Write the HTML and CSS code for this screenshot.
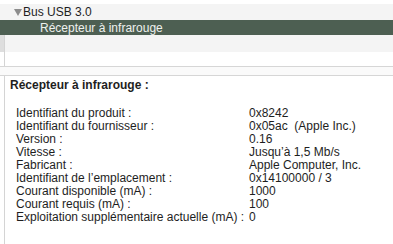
FILE: index.html
```html
<!DOCTYPE html>
<html lang="fr">
<head>
  <meta charset="UTF-8">
  <title>Informations système – USB</title>
  <link rel="stylesheet" href="styles.css">
</head>
<body>
  <div class="tree">
    <div class="row row-cut"></div>
    <div class="row row-alt"><span class="disclosure"></span>Bus USB 3.0</div>
    <div class="row row-selected">Récepteur à infrarouge</div>
    <div class="row row-alt row-edge"></div>
    <div class="row row-plain row-edge"></div>
  </div>

  <div class="splitter"></div>

  <div class="details">
    <h2 class="details-title">Récepteur à infrarouge :</h2>
    <dl class="props">
      <dt>Identifiant du produit :</dt><dd>0x8242</dd>
      <dt>Identifiant du fournisseur :</dt><dd>0x05ac&nbsp; (Apple Inc.)</dd>
      <dt>Version :</dt><dd>0.16</dd>
      <dt>Vitesse :</dt><dd>Jusqu’à 1,5 Mb/s</dd>
      <dt>Fabricant :</dt><dd>Apple Computer, Inc.</dd>
      <dt>Identifiant de l’emplacement :</dt><dd>0x14100000 / 3</dd>
      <dt>Courant disponible (mA) :</dt><dd>1000</dd>
      <dt>Courant requis (mA) :</dt><dd>100</dd>
      <dt>Exploitation supplémentaire actuelle (mA) :</dt><dd>0</dd>
    </dl>
  </div>
</body>
</html>
```

FILE: styles.css
```css
* {
  box-sizing: border-box;
}

html, body {
  height: 100%;
}

body {
  margin: 0;
  overflow: hidden;
  font-family: "Liberation Sans", Arial, sans-serif;
  font-size: 12px;
  color: #1e1e1e;
  background-color: white;
}

.row {
  height: 16px;
  line-height: 17px;
  white-space: nowrap;
}

.row-cut {
  height: 4px;
}

.row-alt {
  background-color: #f4f4f4;
  padding-left: 14px;
}

/* disclosure triangle drawn with borders */
.disclosure {
  display: inline-block;
  width: 0;
  height: 0;
  margin-right: 1px;
  border-left: 4px solid transparent;
  border-right: 4px solid transparent;
  border-top: 7px solid #8c8c8c;
  vertical-align: 0;
}

.row-selected {
  height: 15px;
  line-height: 17px;
  background-color: #4d5f52;
  color: #eef1ee;
  padding-left: 40px;
}

.row-edge {
  height: 17px;
  border-left: 1px solid #d4d4d4;
  margin-left: 4px;
  padding-left: 0;
  position: relative;
}

.row-edge:before {
  content: "";
  position: absolute;
  left: -5px;
  top: 0;
  width: 4px;
  height: 100%;
  background-color: #dedede;
}

.row-plain {
  height: 14px;
  background-color: white;
}

.row-plain:before {
  background-color: white;
}

.splitter {
  height: 10px;
  background-color: #fafafa;
  border-top: 1px solid #d6d6d6;
  border-bottom: 1px solid #d6d6d6;
}

.details {
  height: calc(100% - 76px);
  margin-left: 4px;
  border-left: 1px solid #d4d4d4;
  padding: 2px 0 0 5px;
}

.details-title {
  margin: 0 0 14px 0;
  font-size: 12px;
  font-weight: bold;
  line-height: 15px;
}

.props {
  display: grid;
  grid-template-columns: 233px 1fr;
  margin: 0;
  padding-left: 6px;
  line-height: 13px;
}

.props dt,
.props dd {
  margin: 0;
  white-space: nowrap;
}
```
